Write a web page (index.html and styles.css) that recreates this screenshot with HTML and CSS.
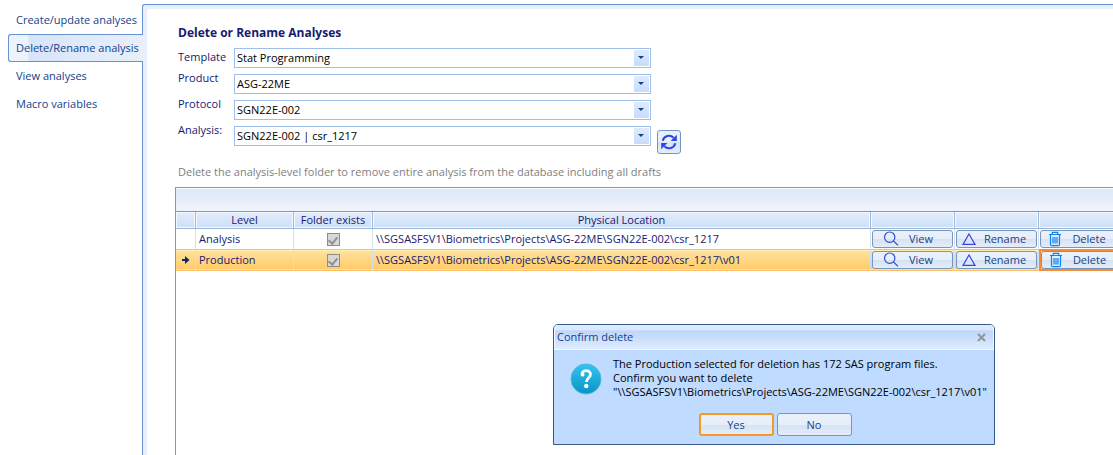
FILE: index.html
```html
<!DOCTYPE html>
<html lang="en">
<head>
<meta charset="utf-8">
<title>Delete or Rename Analyses</title>
<link rel="stylesheet" href="styles.css">
</head>
<body>
<svg class="defs" aria-hidden="true">
  <symbol id="search" viewBox="0 0 16 16"><circle cx="6.7" cy="6.2" r="5.2"/><path d="M10.4 9.900l4.500 4.300"/></symbol>
  <symbol id="triangle" viewBox="0 0 16 16"><path d="M8 3L14 13.400H2z"/></symbol>
  <symbol id="trash" viewBox="0 0 16 16"><path d="M2 3.500h12M5.300 3.300V1.300h5.400v2M3.500 4v9.500q0 1.200 1.200 1.200h6.600q1.200 0 1.200-1.200V4M6 6v6.500M8 6v6.500M10 6v6.500"/></symbol>
</svg>
<div class="app">
  <nav class="tabs">
    <a class="tab" href="#create">Create/update analyses</a>
    <a class="tab tab-active" href="#delete" aria-current="page">Delete/Rename analysis</a>
    <a class="tab" href="#view">View analyses</a>
    <a class="tab" href="#macro">Macro variables</a>
  </nav>
  <main class="panel">
    <h1 class="title">Delete or Rename Analyses</h1>
    <form class="form">
      <div class="fields">
        <label class="label label-middle" for="template">Template</label>
        <span class="combo"><select id="template" class="select"><option>Stat Programming</option></select></span>
        <label class="label" for="product">Product</label>
        <span class="combo"><select id="product" class="select"><option>ASG-22ME</option></select></span>
        <label class="label" for="protocol">Protocol</label>
        <span class="combo"><select id="protocol" class="select"><option>SGN22E-002</option></select></span>
        <label class="label" for="analysis">Analysis:</label>
        <span class="combo"><select id="analysis" class="select"><option>SGN22E-002 | csr_1217</option></select></span>
      </div>
      <button class="button refresh" type="button" aria-label="Refresh">
        <svg class="refresh-icon" viewBox="0 0 16 16"><path class="arc" d="M1.700 6.800A6.400 6.400 0 0 1 12.600 3.800M14.300 9.200A6.400 6.400 0 0 1 3.400 12.200"/><path class="head" d="M15.800 0.800V6.900H9.600zM0.200 15.200V9.100H6.400z"/></svg>
      </button>
    </form>
    <p class="hint">Delete the analysis-level folder to remove entire analysis from the database including all drafts</p>
    <section class="grid">
      <div class="grid-bar"></div>
      <table class="table">
        <colgroup><col class="col-mark"><col class="col-level"><col class="col-exists"><col><col class="col-action"><col class="col-action"><col class="col-action"></colgroup>
        <thead>
          <tr><th></th><th>Level</th><th>Folder exists</th><th>Physical Location</th><th></th><th></th><th></th></tr>
        </thead>
        <tbody>
          <tr>
            <td></td><td>Analysis</td>
            <td class="check-cell"><input class="check" type="checkbox" aria-label="Analysis folder exists" checked disabled></td>
            <td>\\SGSASFSV1\Biometrics\Projects\ASG-22ME\SGN22E-002\csr_1217</td>
            <td class="action-cell"><button class="button action" type="button"><svg class="icon"><use href="#search"/></svg><span class="action-text">View</span></button></td>
            <td class="action-cell"><button class="button action" type="button"><svg class="icon icon-triangle"><use href="#triangle"/></svg><span class="action-text">Rename</span></button></td>
            <td class="action-cell"><button class="button action" type="button"><svg class="icon icon-trash"><use href="#trash"/></svg><span class="action-text">Delete</span></button></td>
          </tr>
          <tr class="selected">
            <td class="mark-cell"><svg class="marker" viewBox="0 0 8 8"><path d="M0 3h3V0l4.500 4L3 8V5H0z"/></svg></td><td>Production</td>
            <td class="check-cell"><input class="check" type="checkbox" aria-label="Production folder exists" checked disabled></td>
            <td>\\SGSASFSV1\Biometrics\Projects\ASG-22ME\SGN22E-002\csr_1217\v01</td>
            <td class="action-cell"><button class="button action" type="button"><svg class="icon"><use href="#search"/></svg><span class="action-text">View</span></button></td>
            <td class="action-cell"><button class="button action" type="button"><svg class="icon icon-triangle"><use href="#triangle"/></svg><span class="action-text">Rename</span></button></td>
            <td class="action-cell action-current"><button class="button action" type="button"><svg class="icon icon-trash"><use href="#trash"/></svg><span class="action-text">Delete</span></button></td>
          </tr>
        </tbody>
      </table>
    </section>
  </main>
</div>
<div class="dialog" role="dialog" aria-labelledby="dialog-title">
  <header class="dialog-head">
    <h2 class="dialog-title" id="dialog-title">Confirm delete</h2>
    <button class="close" type="button" aria-label="Close"><svg class="close-icon" viewBox="0 0 9 9"><path d="M1 1l7 7M8 1L1 8"/></svg></button>
  </header>
  <div class="dialog-body">
    <svg class="question" viewBox="0 0 32 32">
      <defs><linearGradient id="ball" x1="0" y1="0" x2="0" y2="1"><stop offset="0" stop-color="#35c5ee"/><stop offset="1" stop-color="#0794c6"/></linearGradient></defs>
      <circle cx="16" cy="16" r="15" fill="url(#ball)" stroke="#4db4dc"/>
      <path d="M11.900 11.600c0-5.400 8.600-5.200 8.600-.3 0 3.700-4.100 3.800-4.100 7.800" fill="none" stroke="#fff" stroke-width="2.800"/>
      <circle cx="12.600" cy="11.700" r="1.900" fill="#fff"/><circle cx="16.300" cy="23" r="2.200" fill="#fff"/>
    </svg>
    <p class="message">The Production selected for deletion has 172 SAS program files.<br>Confirm you want to delete<br>"\\SGSASFSV1\Biometrics\Projects\ASG-22ME\SGN22E-002\csr_1217\v01"</p>
  </div>
  <footer class="dialog-actions">
    <button class="button choice choice-default" type="button">Yes</button>
    <button class="button choice" type="button">No</button>
  </footer>
</div>
</body>
</html>
```
FILE: styles.css
```css
* { box-sizing: border-box; }
body {
  margin: 0;
  background: #fff;
  color: #191970;
  font: 11px/14px "Open Sans", "Noto Sans", sans-serif;
  overflow: hidden;
}
button, select, input { font: inherit; margin: 0; }
h1, h2, p { margin: 0; }
.defs { display: none; }
.app { display: flex; min-height: 100vh; padding-top: 4px; }
.tabs { flex: none; width: 143px; padding: 2px 0 0 8px; display: flex; flex-direction: column; }
.tab {
  position: relative;
  z-index: 1;
  height: 28px;
  padding-left: 7px;
  border: 1px solid transparent;
  border-right: 0;
  border-radius: 3px 0 0 3px;
  color: #15428b;
  line-height: 26px;
  text-decoration: none;
  white-space: nowrap;
}
.tab-active { border-color: #6593cf; background: linear-gradient(90deg, #ecf3fc 0, #ecf3fc 19px, #d7e5f8 20px, #e8effa 100%); }
.panel {
  flex: 1;
  min-width: 0;
  margin-left: -1px;
  padding: 20px 0 0 32px;
  border: 1px solid #6593cf;
  border-width: 1px 0 0 1px;
  border-radius: 3px 0 0 0;
  box-shadow: inset 4px 4px 0 #e8effa;
}
.title { padding-left: 3px; font-size: 12px; line-height: 16px; font-weight: 700; }
.form { display: flex; align-items: flex-end; gap: 6px; padding: 7px 0 0 3px; }
.fields { display: grid; grid-template-columns: 56px 417px; grid-auto-rows: 20px; row-gap: 6px; padding-bottom: 8px; }
.label { line-height: 8px; }
.label-middle { line-height: 18px; }
.combo { position: relative; display: block; }
.combo::after {
  content: "";
  position: absolute;
  right: 7px;
  top: 8px;
  border: 3px solid transparent;
  border-top-color: #15428b;
  border-bottom: 0;
  pointer-events: none;
}
.select {
  display: block;
  appearance: none;
  width: 100%;
  height: 20px;
  padding: 0 20px 0 2px;
  border: 1px solid #9ebfec;
  border-radius: 0;
  background: linear-gradient(#dfebfc, #c5dcfb) no-repeat right 1px center / 15px 16px #fff;
  color: #000;
}
.button {
  border: 1px solid #7596bf;
  border-radius: 3px;
  background: linear-gradient(#eaf1fb 0, #e6eefa 50%, #d7e2f1 51%, #e4edf9 100%);
  color: #15428b;
  padding: 0;
}
.refresh { width: 24px; height: 24px; display: grid; place-items: center; }
.refresh-icon { width: 16px; height: 16px; }
.arc { fill: none; stroke: #2b45f0; stroke-width: 2; }
.head { fill: #2b45f0; }
.hint { padding: 11px 0 0 3px; color: #808080; }
.grid { margin: 8px -11px 0 0; min-height: 280px; border: 1px solid #6f9dd3; }
.grid-bar { height: 24px; border-top: 1px solid #fff; border-bottom: 1px solid #6f9dd3; background: linear-gradient(#dce7f8, #f0f4fc); }
.table { width: 100%; table-layout: fixed; border-collapse: separate; border-spacing: 0; }
.col-mark { width: 20px; }
.col-level { width: 98px; }
.col-exists { width: 79px; }
.col-action { width: 84px; }
.table th {
  height: 17px;
  padding: 0;
  border-right: 1px solid #9ebbdc;
  border-bottom: 1px solid #9ab5d5;
  background: linear-gradient(#e3edfb, #cddff8);
  box-shadow: inset 1px 1px 0 #f5f9ff, inset -1px -1px 0 #f5f9ff;
  font-weight: 400;
}
.table td { height: 20px; padding: 0 3px; border-right: 1px solid #d5e0f0; white-space: nowrap; }
.table .selected td {
  height: 22px;
  border-top: 1px solid #ffbd69;
  border-bottom: 1px solid #ffbd69;
  background: linear-gradient(#ffe2a0, #ffcb67);
  box-shadow: inset 0 1px 0 #fff0b0, inset 0 -1px 0 #ffe49a;
}
.table .mark-cell { padding: 0 0 0 6px; }
.marker { display: block; width: 8px; height: 8px; fill: #0b2a66; }
.check {
  display: grid;
  place-items: center;
  appearance: none;
  width: 13px;
  height: 13px;
  margin: 0 auto;
  border: 1px solid #8c8c8c;
  background: #d8d8d8;
}
.check::before {
  content: "";
  width: 4px;
  height: 7px;
  border: solid #929292;
  border-width: 0 2px 2px 0;
  transform: rotate(40deg);
}
.table .action-cell { padding: 0 1px; }
.action { display: grid; align-items: center; width: 100%; height: 18px; }
.action-text, .icon { grid-area: 1 / 1; }
.action-text { padding-left: 17px; }
.icon { width: 16px; height: 16px; margin-left: 10px; fill: none; stroke: #2c4fd0; stroke-width: 1.2; }
.icon-triangle { margin-left: 4px; stroke: #3546e8; }
.icon-trash { margin-left: 6px; stroke: #0a84f5; }
.table .selected .action-current { box-shadow: inset 0 0 0 1px #f88b35; border: 1px solid #f88b35; padding: 0 1px; }
.dialog {
  position: absolute;
  left: 553px;
  top: 324px;
  width: 442px;
  border: 1px solid #37588c;
  border-radius: 5px 5px 0 0;
  background: #bfdbff;
  color: #000;
}
.dialog-head {
  display: flex;
  align-items: center;
  justify-content: space-between;
  height: 25px;
  padding: 0 7px 0 2px;
  border: 1px solid #f3f8ff;
  border-top: 0;
  border-radius: 4px 4px 0 0;
  background: linear-gradient(#e1edff 0, #d8e7ff 5px, #bdd6fb 6px, #dfebff 100%);
}
.dialog-title { color: #15428b; font-size: 11px; font-weight: 400; }
.close { display: block; padding: 0; border: 0; background: none; }
.close-icon { display: block; width: 9px; height: 9px; fill: none; stroke: #949494; stroke-width: 2; }
.dialog-body { display: flex; gap: 11px; padding: 7px 0 0 16px; }
.question { width: 32px; height: 32px; margin-top: 6px; }
.message { white-space: nowrap; }
.dialog-actions { display: flex; justify-content: center; gap: 3px; padding: 14px 0 8px 2px; }
.choice { width: 75px; height: 23px; }
.choice-default { border: 2px solid #f39a26; }
```
